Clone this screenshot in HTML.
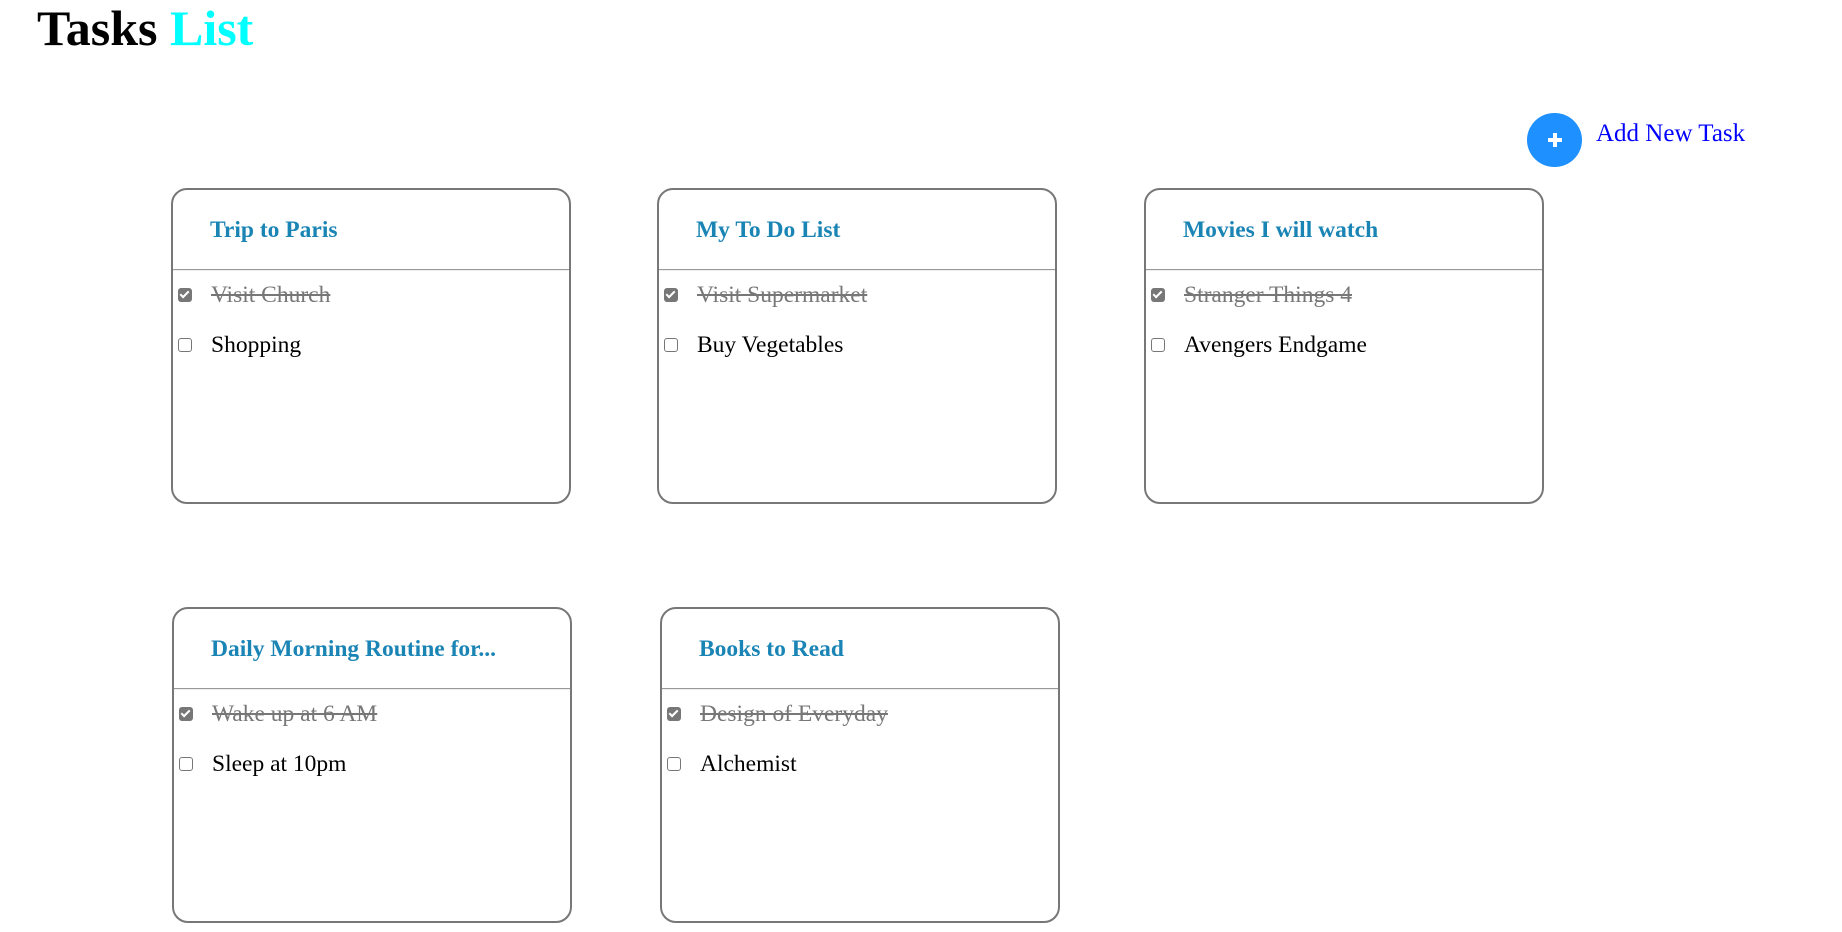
<!DOCTYPE html>
<html><head><meta charset="utf-8"><style>
body{margin:0;width:1842px;height:932px;background:#fff;font-family:"Liberation Serif",serif;position:relative;overflow:hidden}
h1{position:absolute;left:37px;top:-2px;margin:0;font-size:50px;font-weight:bold;line-height:60px}
h1 span{color:#0ff}
.add{position:absolute;left:1527px;top:113px;width:55px;height:54px;border-radius:50%;background:#1e90ff}
.add:before{content:"";position:absolute;left:21px;top:25px;width:14px;height:4px;background:#fff}
.add:after{content:"";position:absolute;left:26px;top:20px;width:4px;height:14px;background:#fff}
.addt{position:absolute;left:1596px;top:119px;font-size:25px;color:#00f;line-height:30px}
.card{position:absolute;width:396px;height:312px;border:2px solid #777;border-radius:16px;box-sizing:content-box}
.card .t{position:absolute;left:37px;top:27px;font-size:23.5px;font-weight:bold;color:#1a85b5;line-height:26px}
.card .sep{position:absolute;left:0;right:0;top:79px;height:1px;background:#999;border-bottom:1px solid #eee}
.it{position:absolute;left:38px;font-size:23.5px;line-height:26px}
.it.d{color:#777;text-decoration:line-through}
.cb{position:absolute;left:5px;width:14px;height:14px;border-radius:3px;box-sizing:border-box}
.cb.c{background:#777}
.cb.u{border:1px solid #777;background:#fff}
.cb.c:after{content:"";position:absolute;left:4px;top:1px;width:3px;height:7px;border:solid #fff;border-width:0 2px 2px 0;transform:rotate(45deg)}
</style></head><body>
<h1>Tasks <span>List</span></h1>
<div class="add"></div><div class="addt">Add New Task</div>

<div class="card" style="left:171px;top:188px"><div class="t">Trip to Paris</div><div class="sep"></div>
<div class="cb c" style="top:98px"></div><div class="it d" style="top:92px">Visit Church</div>
<div class="cb u" style="top:148px"></div><div class="it" style="top:142px">Shopping</div></div>

<div class="card" style="left:657px;top:188px"><div class="t">My To Do List</div><div class="sep"></div>
<div class="cb c" style="top:98px"></div><div class="it d" style="top:92px">Visit Supermarket</div>
<div class="cb u" style="top:148px"></div><div class="it" style="top:142px">Buy Vegetables</div></div>

<div class="card" style="left:1144px;top:188px"><div class="t">Movies I will watch</div><div class="sep"></div>
<div class="cb c" style="top:98px"></div><div class="it d" style="top:92px">Stranger Things 4</div>
<div class="cb u" style="top:148px"></div><div class="it" style="top:142px">Avengers Endgame</div></div>

<div class="card" style="left:172px;top:607px"><div class="t">Daily Morning Routine for...</div><div class="sep"></div>
<div class="cb c" style="top:98px"></div><div class="it d" style="top:92px">Wake up at 6 AM</div>
<div class="cb u" style="top:148px"></div><div class="it" style="top:142px">Sleep at 10pm</div></div>

<div class="card" style="left:660px;top:607px"><div class="t">Books to Read</div><div class="sep"></div>
<div class="cb c" style="top:98px"></div><div class="it d" style="top:92px">Design of Everyday</div>
<div class="cb u" style="top:148px"></div><div class="it" style="top:142px">Alchemist</div></div>
</body></html>
